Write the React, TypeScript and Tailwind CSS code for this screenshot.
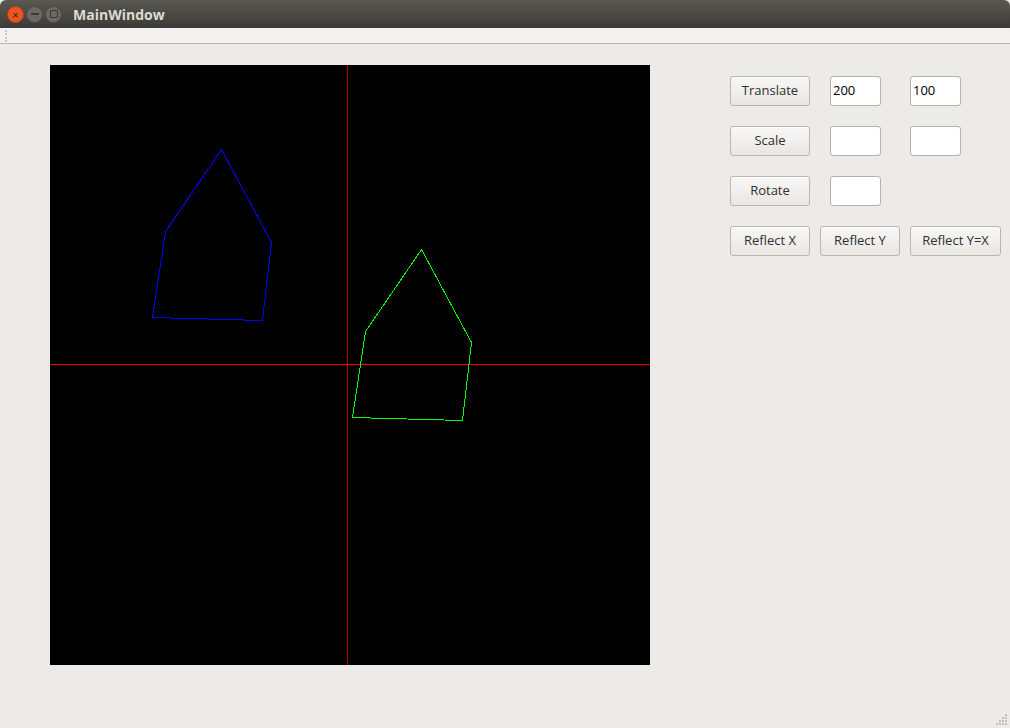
import React from "react";

const font = "font-['Open_Sans','DejaVu_Sans',sans-serif]";

const house = [
  [221, 149],
  [271, 242],
  [262, 320],
  [152, 317],
  [165, 231],
];

const toPoints = (dx: number, dy: number) =>
  [...house, house[0]].map(([x, y]) => `${x - 50 + dx + 0.5},${y - 65 + dy + 0.5}`).join(" ");

const Btn = ({ label, w = "w-[80px]" }: { label: string; w?: string }) => (
  <button
    className={`${w} h-[30px] shrink-0 rounded-[3px] border border-[#b9b5af] bg-gradient-to-b from-[#f8f7f6] to-[#e9e7e4] text-[13px] text-[#2f2f2f] shadow-[inset_0_1px_0_#ffffff]`}
  >
    {label}
  </button>
);

const Field = ({ value = "" }: { value?: string }) => (
  <div className="w-[51px] h-[30px] shrink-0 rounded-[3px] border border-[#b5b1ab] bg-white pl-[2px] flex items-center text-[13px] text-black">
    {value}
  </div>
);

const Canvas = () => (
  <div className="w-[600px] h-[600px] bg-black shrink-0">
    <svg width="600" height="600" shapeRendering="crispEdges">
      <line x1="0" y1="299.5" x2="600" y2="299.5" stroke="#ff0000" strokeWidth="1" />
      <line x1="297.5" y1="0" x2="297.5" y2="600" stroke="#c00000" strokeWidth="1" />
      <polyline points={toPoints(0, 0)} fill="none" stroke="#0000ff" strokeWidth="1" />
      <polyline points={toPoints(200, 100)} fill="none" stroke="#00ff00" strokeWidth="1" />
    </svg>
  </div>
);

const Grip = () => (
  <svg width="12" height="12" className="absolute right-[2px] bottom-[2px]">
    {[
      [9, 0],
      [6, 3],
      [9, 3],
      [3, 6],
      [6, 6],
      [9, 6],
      [0, 9],
      [3, 9],
      [6, 9],
      [9, 9],
    ].map(([x, y], i) => (
      <rect key={i} x={x} y={y} width="2" height="2" fill="#c3bfb9" />
    ))}
  </svg>
);

export default function App() {
  return (
    <div className={`relative w-[1010px] h-[728px] flex flex-col bg-[#edebe7] overflow-hidden ${font}`}>
      <div className="h-[28px] shrink-0 flex items-center bg-gradient-to-b from-[#5a5852] to-[#3c3b37] rounded-t-[6px] pl-[7px] gap-[2px]">
        <div className="w-[17px] h-[17px] rounded-full bg-[#e9561f] border border-[#b8401a] flex items-center justify-center text-[#3a1a0e] text-[11px] leading-none">
          ×
        </div>
        <div className="w-[17px] h-[17px] rounded-full bg-[#6a6964] border border-[#4a4945] flex items-center justify-center">
          <div className="w-[8px] h-[2px] bg-[#3a3935]" />
        </div>
        <div className="w-[17px] h-[17px] rounded-full bg-[#6a6964] border border-[#4a4945] flex items-center justify-center">
          <div className="w-[8px] h-[8px] border border-[#3a3935] rounded-[1px]" />
        </div>
        <span className="ml-[9px] text-[14px] font-bold text-[#dfdbd2]">MainWindow</span>
      </div>
      <div className="h-[16px] shrink-0 bg-[#f3f2f0] border-b border-[#bcb9b4] flex items-center pl-[5px]">
        <div className="w-[3px] h-[12px] border-l-2 border-dotted border-[#c9c6c1]" />
      </div>
      <div className="flex pl-[50px] pt-[21px]">
        <Canvas />
        <div className="ml-[80px] pt-[11px] flex flex-col gap-[20px]">
          <div className="flex gap-[20px] items-center">
            <Btn label="Translate" />
            <Field value="200" />
            <div className="ml-[9px]">
              <Field value="100" />
            </div>
          </div>
          <div className="flex gap-[20px] items-center">
            <Btn label="Scale" />
            <Field />
            <div className="ml-[9px]">
              <Field />
            </div>
          </div>
          <div className="flex gap-[20px] items-center">
            <Btn label="Rotate" />
            <Field />
          </div>
          <div className="flex gap-[10px] items-center">
            <Btn label="Reflect X" />
            <Btn label="Reflect Y" />
            <Btn label="Reflect Y=X" w="w-[91px]" />
          </div>
        </div>
      </div>
      <Grip />
    </div>
  );
}
